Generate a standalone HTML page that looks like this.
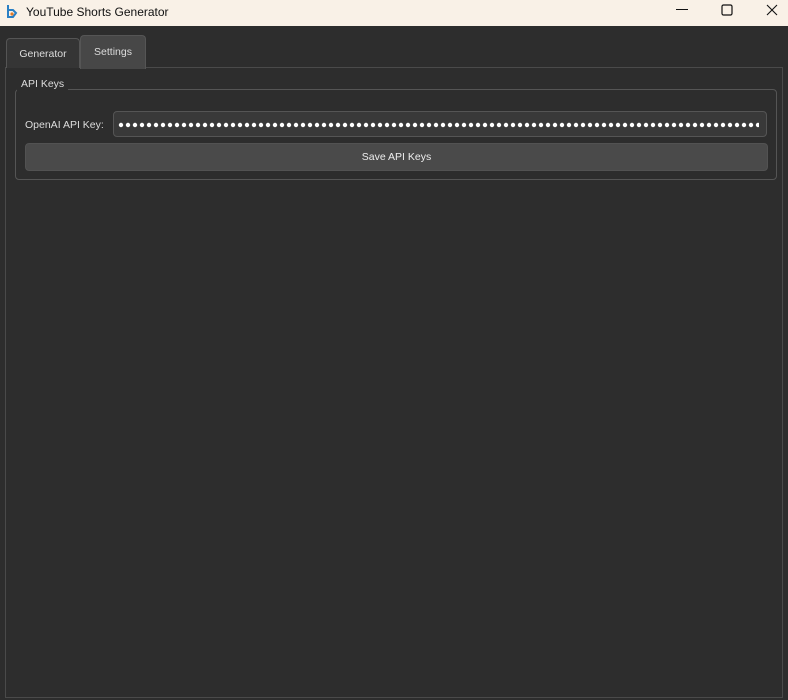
<!DOCTYPE html>
<html><head><style>
body{margin:0;width:788px;height:700px;background:#2d2d2d;font-family:"Liberation Sans",sans-serif;position:relative;overflow:hidden}
.t{position:absolute}
#title{left:0;top:0;width:788px;height:26px;background:#f9f1e7}
#title span{position:absolute;left:26px;top:5px;font-size:12px;color:#111}
.tab{position:absolute;border:1px solid #555;border-bottom:none;border-radius:4px 4px 0 0;font-size:11px;color:#ddd;text-align:center}
</style></head><body>
<div id="title" class="t">
<svg class="t" style="left:6px;top:4px" width="13" height="16" viewBox="0 0 13 16"><path d="M2 1v13M2 6h5l3 3-3 4H2" stroke="#2a7fc4" stroke-width="2" fill="none"/><circle cx="6" cy="10" r="1.6" fill="#e07a2a"/></svg>
<span>YouTube Shorts Generator</span>
<svg class="t" style="left:676px;top:9px" width="12" height="2"><rect width="12" height="1" fill="#111"/></svg>
<svg class="t" style="left:721px;top:4px" width="12" height="12"><rect x="1" y="1" width="10" height="10" rx="1.5" fill="none" stroke="#111" stroke-width="1.2"/></svg>
<svg class="t" style="left:766px;top:4px" width="12" height="12"><path d="M1 1L11 11M11 1L1 11" stroke="#111" stroke-width="1.1"/></svg>
</div>
<div class="t" style="left:5px;top:67px;width:776px;height:629px;border:1px solid #4a4a4a"></div>
<div class="tab" style="left:6px;top:38px;width:72px;height:29px;background:#353535;line-height:30px;font-size:10.5px">Generator</div>
<div class="tab" style="left:80px;top:35px;width:64px;height:33px;background:#474747;line-height:33px;font-size:10.5px">Settings</div>
<div class="t" style="left:15px;top:89px;width:760px;height:89px;border:1px solid #555;border-radius:4px"></div>
<div class="t" style="left:17px;top:77px;padding:0 4px;background:#2d2d2d;font-size:10.5px;color:#ddd;line-height:14px">API Keys</div>
<div class="t" style="left:25px;top:119px;font-size:10.5px;color:#ddd">OpenAI API Key:</div>
<div class="t" style="left:113px;top:111px;width:652px;height:24px;background:#393939;border:1px solid #555;border-radius:4px;overflow:hidden">
<svg width="652" height="24"><defs><pattern id="d" x="4" width="7" height="24" patternUnits="userSpaceOnUse"><circle cx="3" cy="13" r="2.2" fill="#fff"/></pattern></defs><rect x="3" y="0" width="642" height="24" fill="url(#d)"/></svg>
</div>
<div class="t" style="left:25px;top:143px;width:741px;height:26px;background:#4a4a4a;border:1px solid #525252;border-radius:4px;font-size:10.5px;color:#eee;text-align:center;line-height:27px">Save API Keys</div>
</body></html>
